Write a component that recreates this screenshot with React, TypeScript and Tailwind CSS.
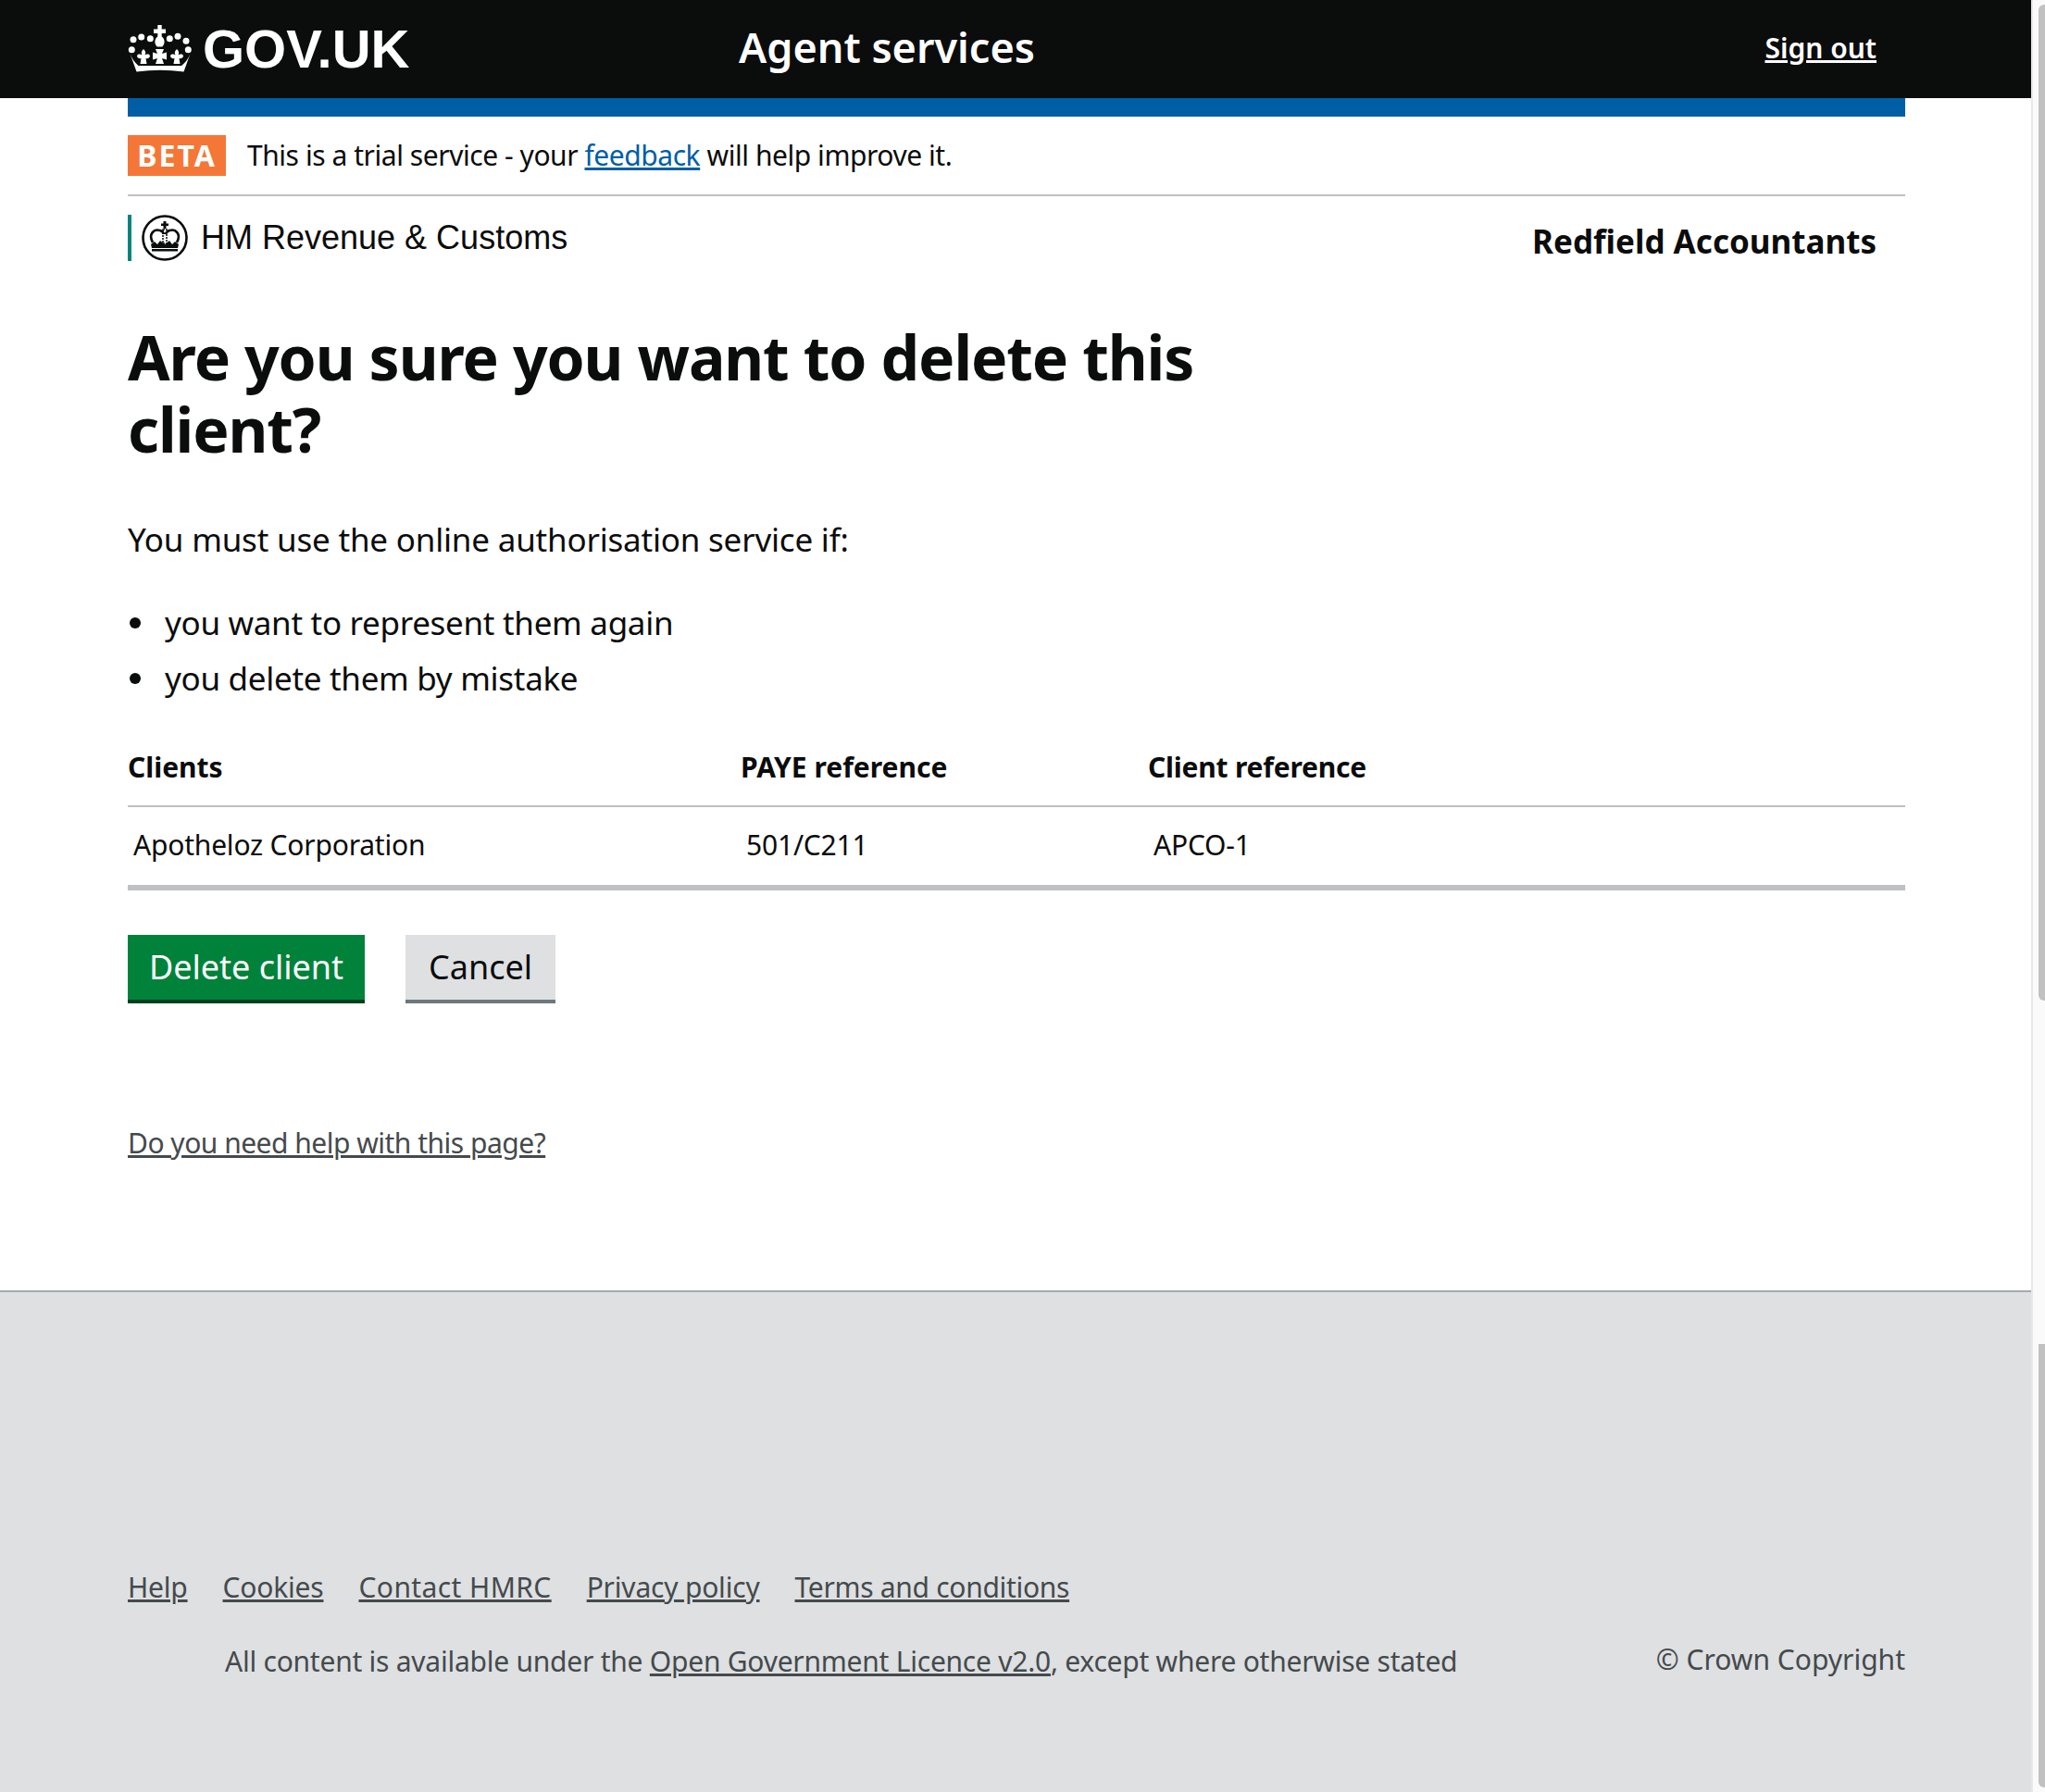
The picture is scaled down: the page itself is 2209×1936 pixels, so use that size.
const font = "font-['Noto_Sans','Liberation_Sans',sans-serif]";

function Fleur({ x }: { x: number }) {
  return (
    <path
      transform={`translate(${x} 0)`}
      d="M0 26c2 2 3 4 1.500 6.500c2-1.500 5-1.500 5.500 1c-.5 2.500-2.500 3-4.500 2.500l1 6h-7l1-6c-2 .5-4 0-4.500-2.500c.5-2.500 3.500-2.500 5.500-1c-1.500-2.500-.5-4.500 1.500-6.500z"
    />
  );
}

function Crown({ className }: { className?: string }) {
  return (
    <svg className={className} viewBox="0 0 70 52" fill="#fff">
      <path d="M32.300 0h4.400v4.500h4.300v4.500h-4.300v3.500c3.500 2.500 4 8 .5 11h-5.400c-3.500-3-3-8.500.5-11V9H28V4.500h4.300z" />
      <circle cx="6" cy="15.700" r="3.500" />
      <circle cx="14.700" cy="13" r="3.500" />
      <circle cx="24.300" cy="14.700" r="3.500" />
      <circle cx="45.300" cy="14.700" r="3.500" />
      <circle cx="54" cy="12.300" r="3.500" />
      <circle cx="63" cy="17.300" r="3.500" />
      <circle cx="4.300" cy="26.700" r="3.500" />
      <circle cx="65.300" cy="26.700" r="3.500" />
      <path d="M2.500 31L9.500 50.500Q35 47 60.500 50.500L67.500 31C65 37 62 41 58 44L11.500 44C8 41 5 37 2.500 31z" />
      <Fleur x={17} />
      <Fleur x={53} />
      <path d="M30 26h9l-2 5 5-1.500v8l-5-1.500 2 6h-9l2-6-5 1.500v-8l5 1.500z" />
    </svg>
  );
}

function HmrcCrest({ className }: { className?: string }) {
  return (
    <svg className={className} viewBox="0 0 50 50">
      <circle cx="25" cy="25" r="23.500" fill="#fff" stroke="#0b0c0c" strokeWidth="2.600" />
      <path d="M23.500 7h3v2.500h2.500v2.500h-2.500v3h-3v-3H21V9.500h2.500z" fill="#0b0c0c" />
      <path d="M23 16h4v15h-4z" fill="none" stroke="#0b0c0c" strokeWidth="1.500" strokeDasharray="2 1" />
      <path d="M12 30c-5-9 1-15 8-13 2 .7 3.500 2 4 4M38 30c5-9-1-15-8-13-2 .7-3.500 2-4 4" fill="none" stroke="#0b0c0c" strokeWidth="2.600" />
      <path d="M10 32l4-3 3 3 3-4 5 4 5-4 3 4 3-3 4 3-1 4H11z" fill="#0b0c0c" />
      <path d="M11 37h28v2.500H11z" fill="#0b0c0c" />
    </svg>
  );
}

function Bullet({ children }: { children: React.ReactNode }) {
  return (
    <li className="flex items-center">
      <span className="ml-[2px] mr-[26px] h-[12px] w-[12px] shrink-0 rounded-full bg-[#0b0c0c]" />
      {children}
    </li>
  );
}

export default function App() {
  return (
    <div className={`${font} flex h-[1936px] w-[2209px] overflow-hidden bg-white text-[#0b0c0c]`}>
      <div className="flex w-[2194px] flex-col">
        <header className="h-[106px] shrink-0 bg-[#0b0c0c] pl-[138px] pr-[136px] text-white">
          <div className="flex h-full items-center">
            <div className="flex w-[660px] items-center">
              <Crown className="h-[52px] w-[70px]" />
              <span className="ml-[11px] font-['Liberation_Sans',sans-serif] text-[58px] font-bold leading-none">GOV.UK</span>
            </div>
            <span className="mb-[5px] text-[45px] font-semibold leading-none">Agent services</span>
            <a href="#" className="ml-auto mb-[3px] mr-[31px] text-[30px] font-semibold leading-none underline">Sign out</a>
          </div>
        </header>

        <div className="ml-[138px] mr-[136px]">
          <div className="h-[20px] bg-[#005ea5]" />
          <div className="flex h-[86px] items-center border-b-2 border-[#bfc1c3]">
            <strong className="flex h-[44px] w-[106px] items-center justify-center bg-[#f47738] pb-[1px] text-[32px] font-bold tracking-[2px] text-white">BETA</strong>
            <p className="mb-[2px] ml-[23px] text-[30px] tracking-[-0.450px]">
              This is a trial service - your <a href="#" className="text-[#005ea5] underline">feedback</a> will help improve it.
            </p>
          </div>
          <div className="flex items-start justify-between pt-[20px]">
            <div className="flex h-[50px] items-center border-l-4 border-[#00847d] pl-[11px]">
              <HmrcCrest className="h-[50px] w-[50px]" />
              <span className="ml-[14px] font-['Liberation_Sans',sans-serif] text-[36px] leading-none">HM Revenue &amp; Customs</span>
            </div>
            <span className="mr-[31px] mt-[11px] text-[35px] font-bold leading-none">Redfield Accountants</span>
          </div>

          <h1 className="mt-[64px] max-w-[1260px] text-[66px] font-bold leading-[78px] tracking-[-1.100px]">Are you sure you want to delete this client?</h1>
          <p className="mt-[56px] text-[35px] leading-[50px] tracking-[-0.2px]">You must use the online authorisation service if:</p>
          <ul className="mt-[40px] text-[35px] leading-[50px] tracking-[-0.3px]">
            <Bullet>you want to represent them again</Bullet>
            <div className="h-[10px]" />
            <Bullet>you delete them by mistake</Bullet>
          </ul>

          <table className="mt-[41px] w-full border-collapse text-left">
            <thead>
              <tr className="border-b-2 border-[#bfc1c3] text-[30px] font-bold">
                <th className="h-[72px] w-[662px] pb-[12px]">Clients</th>
                <th className="w-[440px] pb-[12px]">PAYE reference</th>
                <th className="pb-[12px] tracking-[-0.2px]">Client reference</th>
              </tr>
            </thead>
            <tbody>
              <tr className="border-b-[6px] border-[#bfc1c3] text-[30px] tracking-[-0.2px]">
                <td className="h-[88px] pb-[4px] pl-[6px]">Apotheloz Corporation</td>
                <td className="pb-[4px] pl-[6px]">501/C211</td>
                <td className="pb-[4px] pl-[6px]">APCO-1</td>
              </tr>
            </tbody>
          </table>

          <div className="mt-[48px] flex gap-[44px]">
            <button className="h-[74px] w-[256px] border-b-4 border-[#00401e] bg-[#00823b] text-[36px] text-white">Delete client</button>
            <button className="h-[74px] w-[162px] border-b-4 border-[#6f777b] bg-[#dee0e2] text-[36px]">Cancel</button>
          </div>

          <a href="#" className="mt-[128px] block text-[30px] tracking-[-0.5px] text-[#454a4c] underline">Do you need help with this page?</a>
        </div>

        <footer className="mt-auto flex h-[542px] flex-col border-t-2 border-[#a1acb2] bg-[#dee0e2] pl-[138px] pr-[136px] text-[#454a4c]">
          <ul className="mt-[296px] flex gap-[38px] text-[30px] tracking-[-0.2px] underline">
            <li>Help</li>
            <li>Cookies</li>
            <li className="tracking-[0.400px]">Contact HMRC</li>
            <li>Privacy policy</li>
            <li className="tracking-[-0.300px]">Terms and conditions</li>
          </ul>
          <div className="mt-[35px] flex items-start justify-between text-[30px]">
            <p className="ml-[105px] tracking-[-0.240px]">All content is available under the <a href="#" className="underline">Open Government Licence v2.0</a>, except where otherwise stated</p>
            <p className="-mt-[2px]">© Crown Copyright</p>
          </div>
        </footer>
      </div>

      {/* scrollbar */}
      <div className="flex h-full w-[15px] flex-col border-l-2 border-[#e8e8e8] bg-[#fafafa] pl-[6px]">
        <div className="mt-[5px] h-[1076px] w-[7px] rounded-tl-[6px] rounded-bl-[6px] bg-[#c1c1c1]" />
        <div className="mt-[371px] h-[479px] w-[7px] rounded-bl-[6px] bg-[#c1c1c1]" />
      </div>
    </div>
  );
}
